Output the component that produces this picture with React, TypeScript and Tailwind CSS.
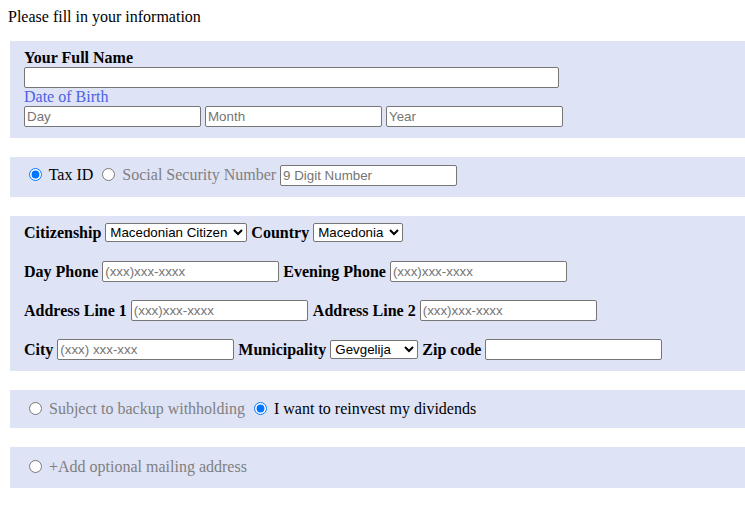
import React from "react";

const field =
  "inline-block align-baseline h-[21px] w-[177px] border border-[#767676] rounded-[2px] bg-white px-[2px] py-[1px] text-[13.33px] font-['Liberation_Sans',Arial,sans-serif] font-normal text-black placeholder:text-[#757575] outline-none";

const dropdown =
  "inline-block h-[19px] border border-[#767676] rounded-[2px] bg-white text-[13.33px] font-['Liberation_Sans',Arial,sans-serif] font-normal text-black";

const radio = "align-[-1px] ml-[5px] mr-[3px] mt-[3px] h-[13px] w-[13px]";

const panel = "bg-[#dfe3f6] ml-[2px] mr-[-8px]";

const row = "flex items-center gap-[4px] h-[21px] whitespace-nowrap font-bold";

export default function App() {
  return (
    <div className="p-2 font-['Liberation_Serif','Times_New_Roman',serif] text-[16px] text-black leading-[18px] bg-white min-h-screen">
      <div>Please fill in your information</div>

      <div className={`${panel} mt-[15px] pl-[14px] pt-[8px] pb-[11px]`}>
        <div className="font-bold leading-[18px]">Your Full Name</div>
        <input type="text" className={`${field} w-[535px] block`} />
        <div className="text-[#4d62e6] leading-[18px]">Date of Birth</div>
        <div className="flex gap-[4px] h-[21px]">
          <input type="text" placeholder="Day" className={field} />
          <input type="text" placeholder="Month" className={field} />
          <input type="text" placeholder="Year" className={field} />
        </div>
      </div>

      <div className={`${panel} mt-[19px] pl-[14px] pt-[7px] pb-[11px]`}>
        <div className="whitespace-nowrap leading-[21px]">
          <input type="radio" name="idtype" defaultChecked className={radio} /> Tax ID{" "}
          <input type="radio" name="idtype" className={radio} />{" "}
          <span className="text-[#808080]">Social Security Number</span>{" "}
          <input type="text" placeholder="9 Digit Number" className={field} />
        </div>
      </div>

      <div className={`${panel} mt-[19px] pl-[14px] pt-[6px] pb-[11px]`}>
        <div className="flex flex-col gap-[18px]">
          <div className={row}>
            <span>Citizenship</span>
            <select className={`${dropdown} w-[142px]`} defaultValue="mk">
              <option value="mk">Macedonian Citizen</option>
            </select>
            <span>Country</span>
            <select className={`${dropdown} w-[90px]`} defaultValue="mk">
              <option value="mk">Macedonia</option>
            </select>
          </div>
          <div className={row}>
            <span>Day Phone</span>
            <input type="text" placeholder="(xxx)xxx-xxxx" className={field} />
            <span>Evening Phone</span>
            <input type="text" placeholder="(xxx)xxx-xxxx" className={field} />
          </div>
          <div className={row}>
            <span>Address Line 1</span>
            <input type="text" placeholder="(xxx)xxx-xxxx" className={field} />
            <span className="ml-[1px]">Address Line 2</span>
            <input type="text" placeholder="(xxx)xxx-xxxx" className={field} />
          </div>
          <div className={row}>
            <span>City</span>
            <input type="text" placeholder="(xxx) xxx-xxx" className={field} />
            <span>Municipality</span>
            <select className={`${dropdown} w-[88px]`} defaultValue="gv">
              <option value="gv">Gevgelija</option>
            </select>
            <span>Zip code</span>
            <input type="text" className={field} />
          </div>
        </div>
      </div>

      <div className={`${panel} mt-[19px] pl-[14px] pt-[9px] pb-[10px]`}>
        <div className="whitespace-nowrap">
          <input type="radio" name="div" className={radio} />{" "}
          <span className="text-[#808080]">Subject to backup withholding</span>{" "}
          <input type="radio" name="div" defaultChecked className={radio} /> I want to reinvest my dividends
        </div>
      </div>

      <div className={`${panel} mt-[19px] pl-[14px] pt-[10px] pb-[12px]`}>
        <div className="whitespace-nowrap">
          <input type="radio" name="mail" className={radio} />{" "}
          <span className="text-[#808080]">+Add optional mailing address</span>
        </div>
      </div>
    </div>
  );
}
